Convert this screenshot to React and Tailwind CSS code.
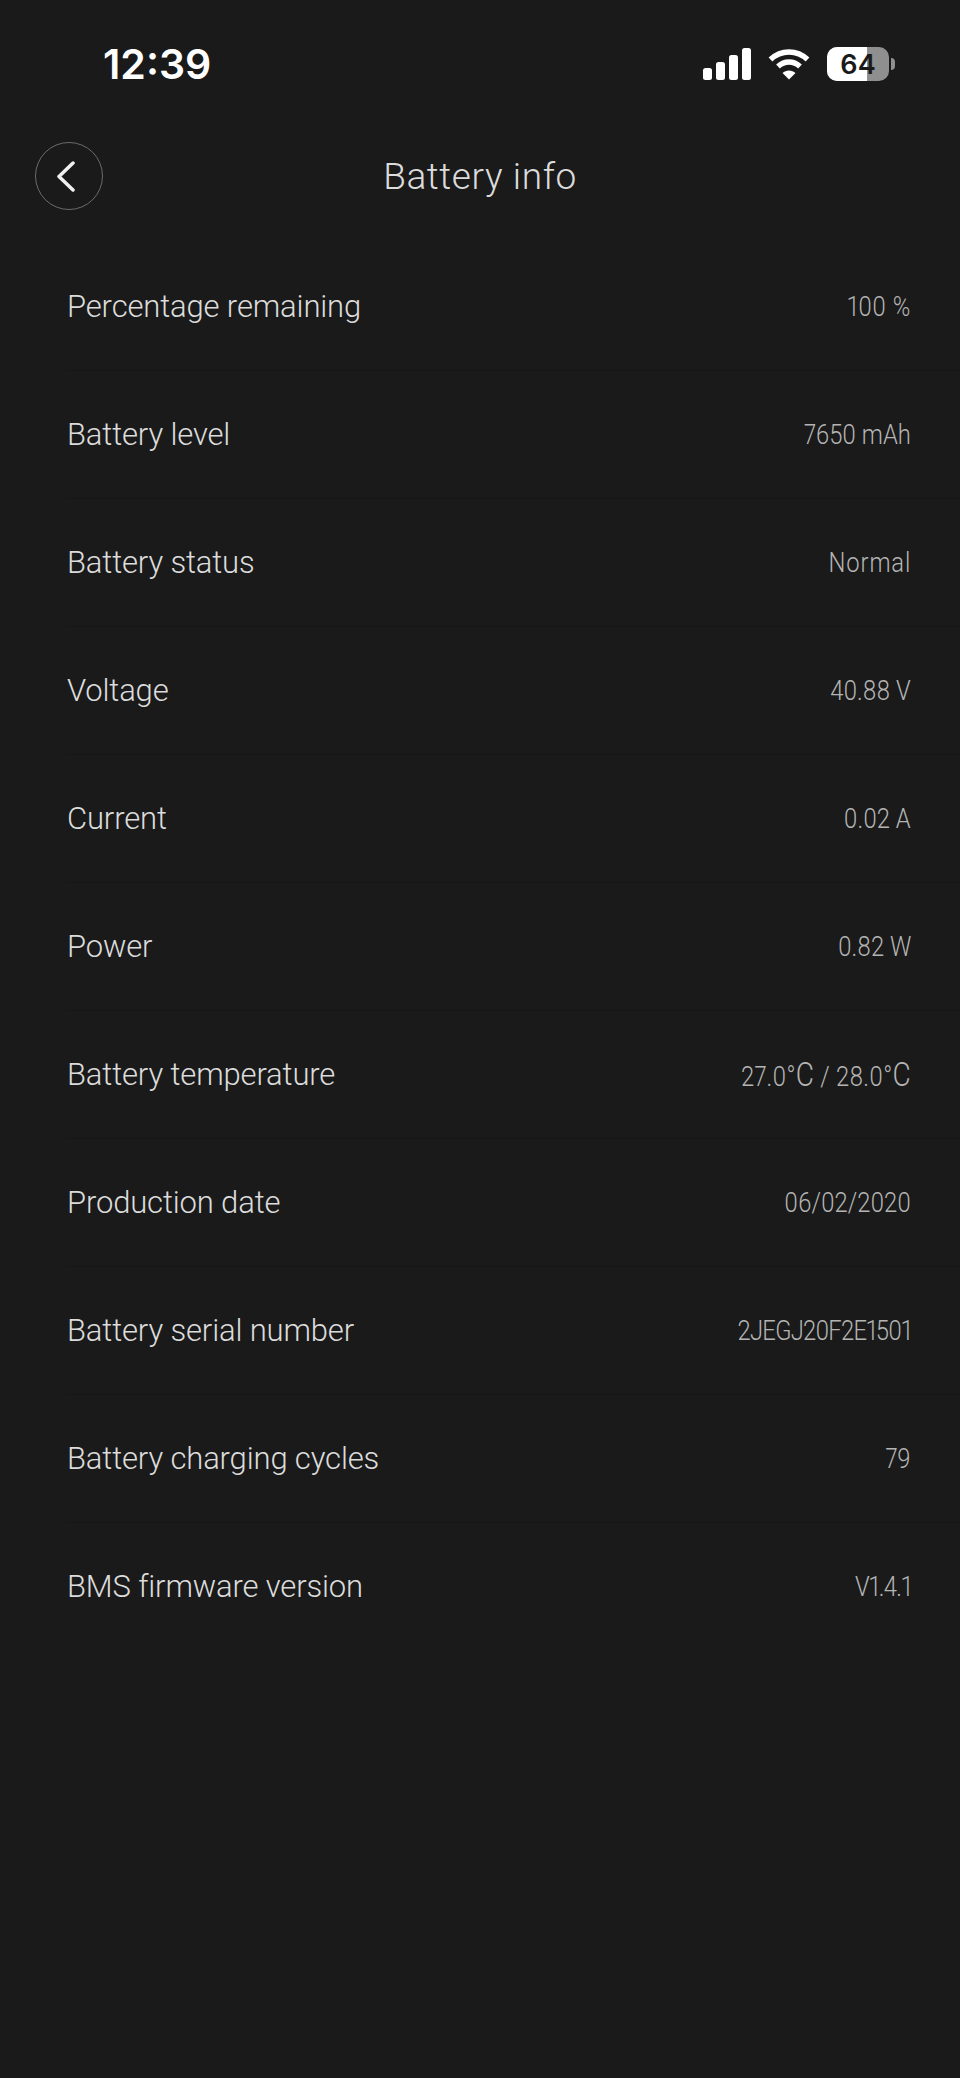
const rows = [
  ["Percentage remaining", "100 %", "tracking-[0.6px]"],
  ["Battery level", "7650 mAh"],
  ["Battery status", "Normal", "tracking-[1px]"],
  ["Voltage", "40.88 V"],
  ["Current", "0.02 A"],
  ["Power", "0.82 W"],
  ["Battery temperature", null, "tracking-[0.3px]"],
  ["Production date", "06/02/2020"],
  ["Battery serial number", "2JEGJ20F2E1501", "tracking-[-0.9px]"],
  ["Battery charging cycles", "79"],
  ["BMS firmware version", "V1.4.1", "tracking-[-0.8px]"],
];

function StatusBar() {
  return (
    <div className="flex h-[128px] items-start justify-between pt-[41px] pl-[103px] pr-[65px]">
      <span className="font-['Inter',sans-serif] text-[41px] leading-[46px] font-semibold text-white">
        12:39
      </span>
      <div className="flex items-center gap-[17px] pt-[6px]">
        <svg width="49" height="32" viewBox="0 0 49 32" fill="#fff">
          <rect x="1" y="20" width="9" height="12" rx="2.5" />
          <rect x="14" y="14" width="9" height="18" rx="2.5" />
          <rect x="27" y="7" width="9" height="25" rx="2.5" />
          <rect x="40" y="0" width="9" height="32" rx="2.5" />
        </svg>
        <svg width="42" height="32" viewBox="0 0 42 32" fill="none" stroke="#fff" strokeWidth="5.5">
          <path d="M2.5 11.5C13 1.5 29 1.5 39.5 11.5" />
          <path d="M10 18.5C16.5 12.5 25.5 12.5 32 18.5" />
          <path d="M21 31.5L14.5 25C18 21.5 24 21.5 27.5 25Z" fill="#fff" stroke="none" />
        </svg>
        <div className="flex items-center gap-[2px]">
          <div className="relative flex h-[34px] w-[62px] items-center justify-center overflow-hidden rounded-[10px] bg-[#8f8f8f]">
            <div className="absolute inset-y-0 left-0 w-[40px] bg-white" />
            <span className="relative font-['Inter',sans-serif] text-[27px] leading-none font-semibold text-[#1a1a1a]">
              64
            </span>
          </div>
          <div className="h-[12px] w-[4px] rounded-r-full bg-[#8f8f8f]" />
        </div>
      </div>
    </div>
  );
}

function Row({ label, value, spacing }) {
  return (
    <div className="flex h-[128px] items-center justify-between border-b border-[#161616] pr-[49px] last:border-b-0">
      <span className="pt-[1px] font-['Roboto',sans-serif] text-[31px] font-light tracking-[-0.15px] text-[#dcdcdc]">
        {label}
      </span>
      {/* values are a condensed face in the app, Roboto squeezed to fit */}
      <span className={`inline-block origin-right scale-x-[0.85] font-['Roboto',sans-serif] text-[28px] font-light proportional-nums text-[#b4b4b4] ${spacing || ""}`}>
        {value ?? (
          <>
            27.0°<span className="text-[33px]">C</span> / 28.0°<span className="text-[33px]">C</span>
          </>
        )}
      </span>
    </div>
  );
}

export default function App() {
  return (
    <div className="min-h-[2078px] w-[960px] bg-[#1a1a1a]">
      <StatusBar />
      <div className="relative flex h-[115px] items-start justify-center pt-[21px]">
        <button className="absolute top-[14px] left-[35px] flex h-[68px] w-[68px] items-center justify-center rounded-full border-[1.5px] border-[#6b6b6b] pr-[6px]">
          <svg width="18" height="31" viewBox="0 0 18 31" fill="none" stroke="#f0f0f0" strokeWidth="3.5" strokeLinecap="round" strokeLinejoin="round">
            <path d="M16 2L2 15.5L16 29" />
          </svg>
        </button>
        <h1 className="font-['Roboto',sans-serif] text-[37px] font-light tracking-[0.6px] text-[#dcdcdc]">
          Battery info
        </h1>
      </div>
      <div className="pl-[67px]">
        {rows.map(([label, value, spacing]) => (
          <Row key={label} label={label} value={value} spacing={spacing} />
        ))}
      </div>
    </div>
  );
}
